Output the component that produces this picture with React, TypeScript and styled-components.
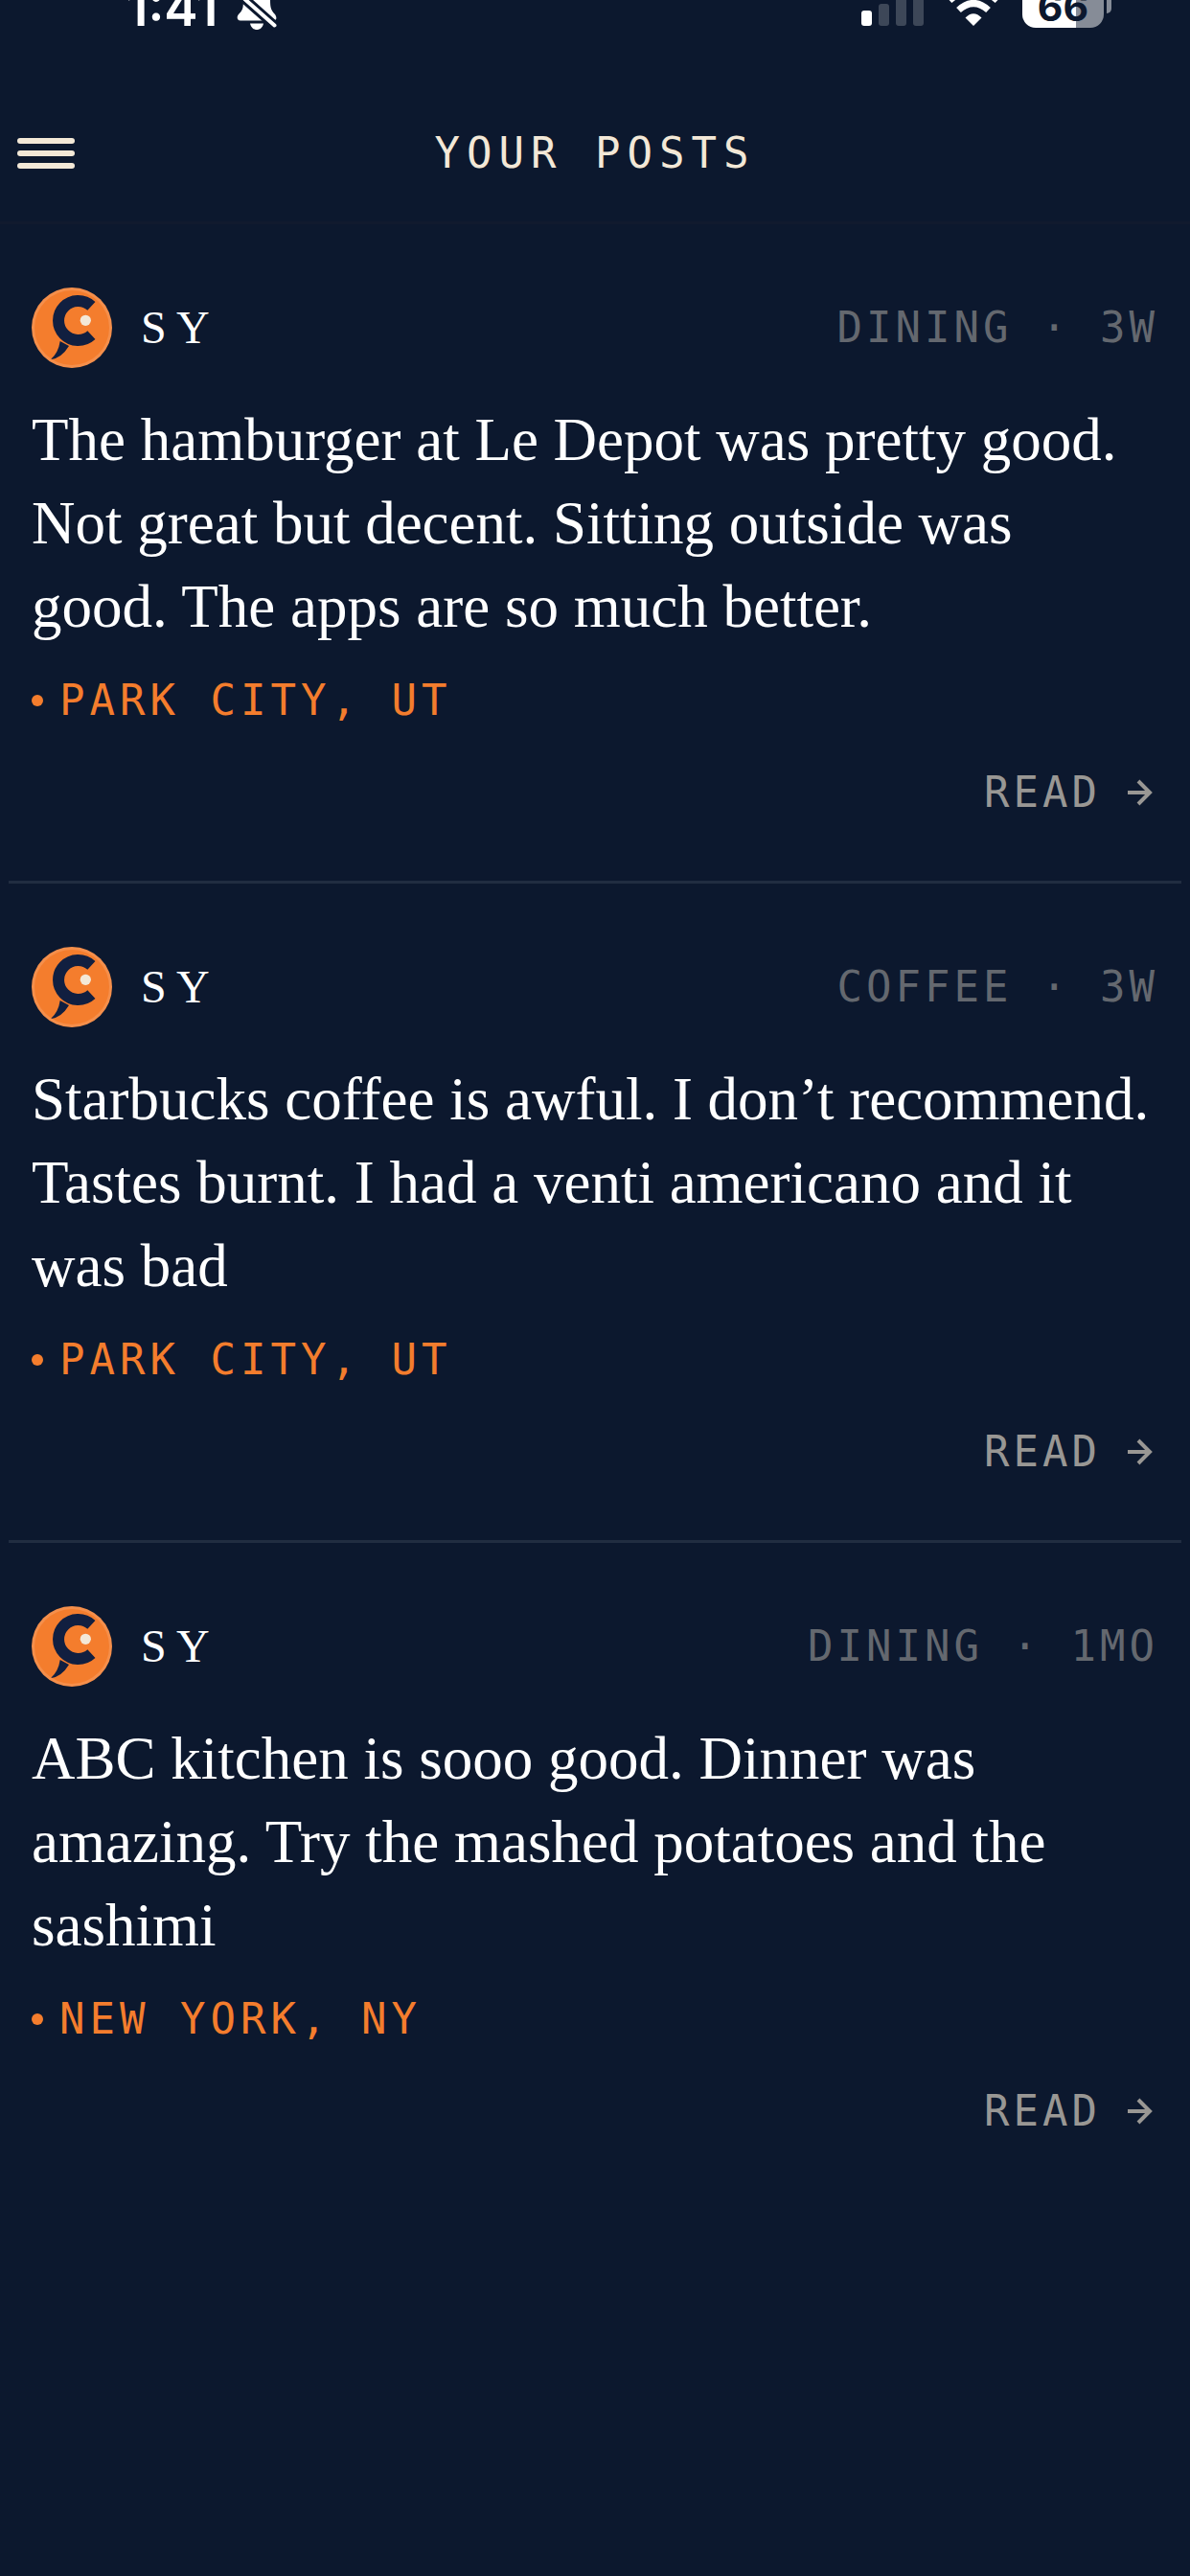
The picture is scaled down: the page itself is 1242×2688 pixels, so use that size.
import React from 'react';
import styled, { createGlobalStyle } from 'styled-components';

const GlobalStyle = createGlobalStyle`
  *, *::before, *::after { box-sizing: border-box; }
  body { margin: 0; background: #0c182e; }
`;

const mono = `'DejaVu Sans Mono', monospace`;
const serif = `'Liberation Serif', serif`;

const Screen = styled.div`
  min-height: 100vh;
  background: #0c182e;
  color: #ffffff;
`;

const StatusBar = styled.div`
  display: flex;
  justify-content: space-between;
  align-items: flex-start;
  height: 84px;
  padding: 0 82px 0 132px;
  overflow: hidden;
`;

const StatusGroup = styled.div<{ $gap: number }>`
  display: flex;
  align-items: flex-start;
  gap: ${(p) => p.$gap}px;
`;

const Clock = styled.time`
  font: 600 53px/16px Inter, sans-serif;
`;

const Battery = styled.div`
  display: flex;
  align-items: flex-start;
  gap: 3px;
`;

const BatteryBody = styled.div`
  width: 85px;
  height: 29px;
  border-radius: 0 0 14px 14px;
  background: linear-gradient(90deg, #ffffff 66%, #868c97 66%);
  color: #0c182e;
  font: 700 41px/14px Inter, sans-serif;
  text-align: center;
`;

const BatteryTip = styled.div`
  width: 5px;
  height: 14px;
  border-radius: 0 0 5px 0;
  background: #868c97;
`;

const TopBar = styled.header`
  display: grid;
  grid-template-columns: 1fr auto 1fr;
  align-items: center;
  height: 150px;
  padding: 4px 18px 0;
  border-bottom: 3px solid #111a2e;
`;

const MenuButton = styled.button`
  display: flex;
  flex-direction: column;
  justify-self: start;
  gap: 7px;
  padding: 0;
  border: 0;
  background: none;
`;

const MenuBar = styled.span`
  width: 60px;
  height: 6px;
  border-radius: 3px;
  background: #f3e8d7;
`;

const Title = styled.h1`
  margin: 0;
  color: #f3e8d7;
  font: 400 44px/60px ${mono};
  letter-spacing: 7px;
`;

const Feed = styled.main`
  padding: 0 9px;
`;

const Post = styled.article`
  padding: 66px 24px 62px;
  & + & { border-top: 3px solid #212d41; }
`;

const PostHead = styled.div`
  display: flex;
  align-items: center;
  gap: 30px;
`;

const Author = styled.span`
  font: 500 48px/60px ${serif};
`;

const Label = styled.span<{ $color: string; $spacing?: number }>`
  color: ${(p) => p.$color};
  font: 400 44px/60px ${mono};
  letter-spacing: ${(p) => p.$spacing ?? 4}px;
`;

const Meta = styled(Label)`
  margin-left: auto;
`;

const Body = styled.p`
  margin: 32px 0 0;
  font: 400 63px/87px ${serif};
`;

const Place = styled.div`
  display: flex;
  align-items: center;
  gap: 17px;
  margin-top: 24px;
`;

const Dot = styled.span`
  width: 12px;
  height: 12px;
  border-radius: 50%;
  background: #f47d2d;
`;

const ReadLink = styled.a`
  display: flex;
  align-items: center;
  justify-content: flex-end;
  gap: 28px;
  margin-top: 36px;
  padding-right: 6px;
  text-decoration: none;
`;

const BellOff = () => (
  <svg width="44" height="32" viewBox="0 0 44 32" aria-hidden="true">
    <path d="M7 0H35C35 8 36 11 40 15C42 18 42 21 39 21.500H4C0 21.500 0 17 2 15C6 11 7 9 7 0Z" fill="#fff" />
    <path d="M14 24.500H28C27 29 24 31 21 31S15 29 14 24.500Z" fill="#fff" />
    <path d="M5 -4L45 31.500" stroke="#0c182e" strokeWidth="10" />
    <path d="M5 -4L39.500 26.500" stroke="#fff" strokeWidth="4" strokeLinecap="round" />
  </svg>
);

const Signal = () => (
  <svg width="66" height="28" viewBox="0 0 66 28" aria-hidden="true">
    <rect x="0" y="11" width="11" height="16" rx="3" fill="#fff" />
    <rect x="18" y="4" width="11" height="23" rx="3" fill="#3d4758" />
    <rect x="36" y="-6" width="11" height="33" rx="3" fill="#3d4758" />
    <rect x="54" y="-12" width="11" height="39" rx="3" fill="#3d4758" />
  </svg>
);

const Wifi = () => (
  <svg width="54" height="28" viewBox="0 0 54 28" aria-hidden="true">
    <path d="M27 27L18.500 18.500Q27 10 35.500 18.500Z" fill="#fff" />
    <path d="M11.500 10.500Q27 -3.500 42.500 10.500" fill="none" stroke="#fff" strokeWidth="7" />
    <path d="M2 0.500Q27 -22 52 0.500" fill="none" stroke="#fff" strokeWidth="7" />
  </svg>
);

const Avatar = () => (
  <svg width="84" height="84" viewBox="0 0 84 84" role="img" aria-label="S Y">
    <circle cx="42" cy="42" r="42" fill="#f58f4b" />
    <circle cx="42" cy="42" r="39" fill="#f47d2d" />
    <path d="M62.400 19.400A20.500 20.500 0 1 0 62.400 49.600" fill="none" stroke="#111f40" strokeWidth="12" />
    <path d="M29.700 56L39 61Q31 74 20 75Q28 68 29.700 56Z" fill="#111f40" />
    <circle cx="56.300" cy="34.300" r="5.600" fill="#f3e8d7" />
  </svg>
);

const Arrow = () => (
  <svg width="26" height="28" viewBox="0 0 26 28" fill="none" stroke="#999794" strokeWidth="4" aria-hidden="true">
    <path d="M0 14H24M11 2L23 14L11 26" />
  </svg>
);

const posts = [
  {
    id: 1,
    meta: 'DINING · 3W',
    text: 'The hamburger at Le Depot was pretty good. Not great but decent. Sitting outside was good. The apps are so much better.',
    place: 'PARK CITY, UT',
  },
  {
    id: 2,
    meta: 'COFFEE · 3W',
    text: 'Starbucks coffee is awful. I don’t recommend. Tastes burnt. I had a venti americano and it was bad',
    place: 'PARK CITY, UT',
  },
  {
    id: 3,
    meta: 'DINING · 1MO',
    text: 'ABC kitchen is sooo good. Dinner was amazing. Try the mashed potatoes and the sashimi',
    place: 'NEW YORK, NY',
  },
];

export default function App() {
  return (
    <Screen>
      <GlobalStyle />
      <StatusBar>
        <StatusGroup $gap={20}>
          <Clock>1:41</Clock>
          <BellOff />
        </StatusGroup>
        <StatusGroup $gap={24}>
          <Signal />
          <Wifi />
          <Battery>
            <BatteryBody>66</BatteryBody>
            <BatteryTip />
          </Battery>
        </StatusGroup>
      </StatusBar>
      <TopBar>
        <MenuButton aria-label="Menu">
          <MenuBar />
          <MenuBar />
          <MenuBar />
        </MenuButton>
        <Title>YOUR POSTS</Title>
      </TopBar>
      <Feed>
        {posts.map((post) => (
          <Post key={post.id}>
            <PostHead>
              <Avatar />
              <Author>S Y</Author>
              <Meta $color="#64686f">{post.meta}</Meta>
            </PostHead>
            <Body>{post.text}</Body>
            <Place>
              <Dot />
              <Label $color="#f47d2d" $spacing={5}>{post.place}</Label>
            </Place>
            <ReadLink href="#">
              <Label $color="#999794">READ</Label>
              <Arrow />
            </ReadLink>
          </Post>
        ))}
      </Feed>
    </Screen>
  );
}
